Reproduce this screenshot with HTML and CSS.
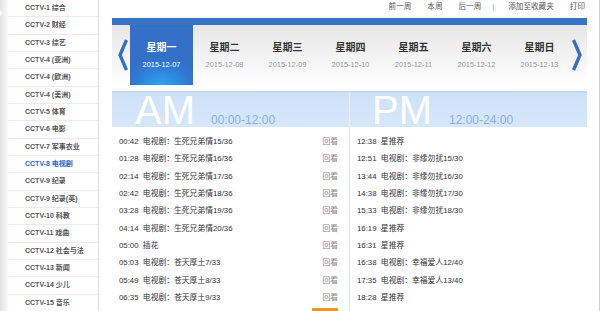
FILE: index.html
```html
<!DOCTYPE html>
<html>
<head>
    <title>CCTV-8 电视剧 节目单</title>
    <link rel="stylesheet" href="styles.css">
</head>
<body>
    <div class="page">
        <ul class="side">
            <li>CCTV-1 综合</li>
            <li>CCTV-2 财经</li>
            <li>CCTV-3 综艺</li>
            <li>CCTV-4 (亚洲)</li>
            <li>CCTV-4 (欧洲)</li>
            <li>CCTV-4 (美洲)</li>
            <li>CCTV-5 体育</li>
            <li>CCTV-6 电影</li>
            <li>CCTV-7 军事农业</li>
            <li class="on">CCTV-8 电视剧</li>
            <li>CCTV-9 纪录</li>
            <li>CCTV-9 纪录(英)</li>
            <li>CCTV-10 科教</li>
            <li>CCTV-11 戏曲</li>
            <li>CCTV-12 社会与法</li>
            <li>CCTV-13 新闻</li>
            <li>CCTV-14 少儿</li>
            <li>CCTV-15 音乐</li>
        </ul>

        <div class="main">
            <div class="toplinks">
                <a>前一周</a>
                <a>本周</a>
                <a>后一周</a>
                <span class="sep">|</span>
                <a>添加至收藏夹</a>
                <a>打印</a>
            </div>

            <div class="week">
                <div class="arrow prev">
                    <svg width="10" height="32" viewBox="0 0 10 32"><path d="M8.5 1 L2 16 L8.5 31" fill="none" stroke="#3470c4" stroke-width="3.4"/></svg>
                </div>
                <div class="day active"><b>星期一</b><span>2015-12-07</span></div>
                <div class="day"><b>星期二</b><span>2015-12-08</span></div>
                <div class="day"><b>星期三</b><span>2015-12-09</span></div>
                <div class="day"><b>星期四</b><span>2015-12-10</span></div>
                <div class="day"><b>星期五</b><span>2015-12-11</span></div>
                <div class="day"><b>星期六</b><span>2015-12-12</span></div>
                <div class="day"><b>星期日</b><span>2015-12-13</span></div>
                <div class="arrow next">
                    <svg width="10" height="32" viewBox="0 0 10 32"><path d="M1.5 1 L8 16 L1.5 31" fill="none" stroke="#3470c4" stroke-width="3.4"/></svg>
                </div>
            </div>

            <div class="halves">
                <div class="half am">
                    <div class="head"><span class="big">AM</span><span class="hours">00:00-12:00</span></div>
                    <ul class="list">
                        <li><span>00:42&nbsp; 电视剧：生死兄弟情15/36</span><a>回看</a></li>
                        <li><span>01:28&nbsp; 电视剧：生死兄弟情16/36</span><a>回看</a></li>
                        <li><span>02:14&nbsp; 电视剧：生死兄弟情17/36</span><a>回看</a></li>
                        <li><span>02:42&nbsp; 电视剧：生死兄弟情18/36</span><a>回看</a></li>
                        <li><span>03:28&nbsp; 电视剧：生死兄弟情19/36</span><a>回看</a></li>
                        <li><span>04:14&nbsp; 电视剧：生死兄弟情20/36</span><a>回看</a></li>
                        <li><span>05:00&nbsp; 插花</span><a>回看</a></li>
                        <li><span>05:03&nbsp; 电视剧：苍天厚土7/33</span><a>回看</a></li>
                        <li><span>05:49&nbsp; 电视剧：苍天厚土8/33</span><a>回看</a></li>
                        <li><span>06:35&nbsp; 电视剧：苍天厚土9/33</span><a>回看</a></li>
                        <li><span></span><a class="live"></a></li>
                    </ul>
                </div>
                <div class="half pm">
                    <div class="head"><span class="big">PM</span><span class="hours">12:00-24:00</span></div>
                    <ul class="list">
                        <li><span>12:38&nbsp; 星推荐</span></li>
                        <li><span>12:51&nbsp; 电视剧：非缘勿扰15/30</span></li>
                        <li><span>13:44&nbsp; 电视剧：非缘勿扰16/30</span></li>
                        <li><span>14:38&nbsp; 电视剧：非缘勿扰17/30</span></li>
                        <li><span>15:33&nbsp; 电视剧：非缘勿扰18/30</span></li>
                        <li><span>16:19&nbsp; 星推荐</span></li>
                        <li><span>16:31&nbsp; 星推荐</span></li>
                        <li><span>16:38&nbsp; 电视剧：幸福爱人12/40</span></li>
                        <li><span>17:35&nbsp; 电视剧：幸福爱人13/40</span></li>
                        <li><span>18:28&nbsp; 星推荐</span></li>
                    </ul>
                </div>
            </div>
        </div>
    </div>
</body>
</html>
```

FILE: styles.css
```css
body {
    margin: 0;
    font-family: 'Liberation Sans', 'Noto Sans CJK SC', sans-serif;
    background-color: #fff;
    color: #333;
}

ul {
    margin: 0;
    padding: 0;
    list-style: none;
}

.page {
    display: flex;
    width: 600px;
    height: 311px;
    overflow: hidden;
}

/* channel list */
.side {
    position: relative;
    width: 98px;
    flex: none;
    border-right: 1px solid #dcdcdc;
    background: linear-gradient(to right, #e2e2e2, #f4f4f4 6px, #fff 9px);
}

.side::before {
    content: '';
    position: absolute;
    left: 0;
    top: 10px;
    border-left: 3px solid #fff;
    border-top: 3px solid transparent;
    border-bottom: 3px solid transparent;
}

.side li {
    height: 16.33px;
    line-height: 16.33px;
    margin-left: 8px;
    padding-left: 17px;
    border-bottom: 1px solid #ebebeb;
    font-size: 7px;
    font-weight: bold;
    color: #555;
    white-space: nowrap;
}

.side li.on {
    color: #2d68c4;
}

/* right side */
.main {
    flex: 1;
    padding: 0 12px 0 13px;
    border-right: 1px solid #cfcfcf;
}

.toplinks {
    display: flex;
    justify-content: flex-end;
    height: 18px;
    line-height: 13px;
    padding-right: 2px;
    font-size: 7.6px;
    color: #555;
}

.toplinks a,
.toplinks .sep {
    margin-left: 16px;
}

.toplinks .sep {
    margin-left: 11px;
    margin-right: -2px;
    color: #999;
}

.week {
    display: flex;
    height: 60px;
    border-top: 7px solid #3a72c4;
    background: linear-gradient(#e6e6e6, #f5f5f5 60%, #fff);
}

.arrow {
    display: flex;
    align-items: center;
}

.arrow.prev {
    width: 18px;
    padding-left: 6px;
    box-sizing: border-box;
}

.arrow.next {
    width: 16px;
    padding-left: 1px;
    box-sizing: border-box;
}

.day {
    display: flex;
    flex-direction: column;
    align-items: center;
    width: 63px;
    padding-top: 16px;
    box-sizing: border-box;
}

.day b {
    font-size: 10px;
    line-height: 14px;
    color: #333;
}

.day span {
    margin-top: 5px;
    font-size: 7.4px;
    line-height: 10px;
    color: #999;
}

.day.active {
    background: radial-gradient(ellipse 60% 45% at 50% 100%, #2aa6f4, #3175d0 80%, #3570c8);
}

.day.active b,
.day.active span {
    color: #fff;
}

/* am / pm */
.halves {
    display: grid;
    grid-template-columns: 237px 238px;
    margin-top: 6px;
}

.head {
    display: flex;
    align-items: baseline;
    height: 34px;
    padding-left: 23px;
    border-top: 2px solid #c3d9f5;
    background: linear-gradient(#cfe2f9, #d6e7fb);
}

.big {
    font-size: 40px;
    line-height: 34px;
    color: #fff;
}

.hours {
    margin-left: 16px;
    font-size: 12px;
    color: #8caee2;
}

.pm .head {
    border-left: 1px solid #e6eefb;
    padding-left: 22px;
}

.pm .hours {
    margin-left: 17px;
}

.list {
    padding-top: 6px;
}

.list li {
    display: flex;
    justify-content: space-between;
    height: 17.33px;
    line-height: 17.33px;
    font-size: 7.8px;
    color: #333;
    white-space: nowrap;
}

.am .list li {
    padding: 0 11px 0 7px;
}

.pm .list {
    border-left: 1px solid #e3e3e3;
    height: 200px;
}

.pm .list li {
    padding-left: 7px;
}

.list a {
    color: #888;
}

.list a.live {
    width: 26px;
    height: 14px;
    margin-top: 2px;
    background-color: #f7941d;
}
```
